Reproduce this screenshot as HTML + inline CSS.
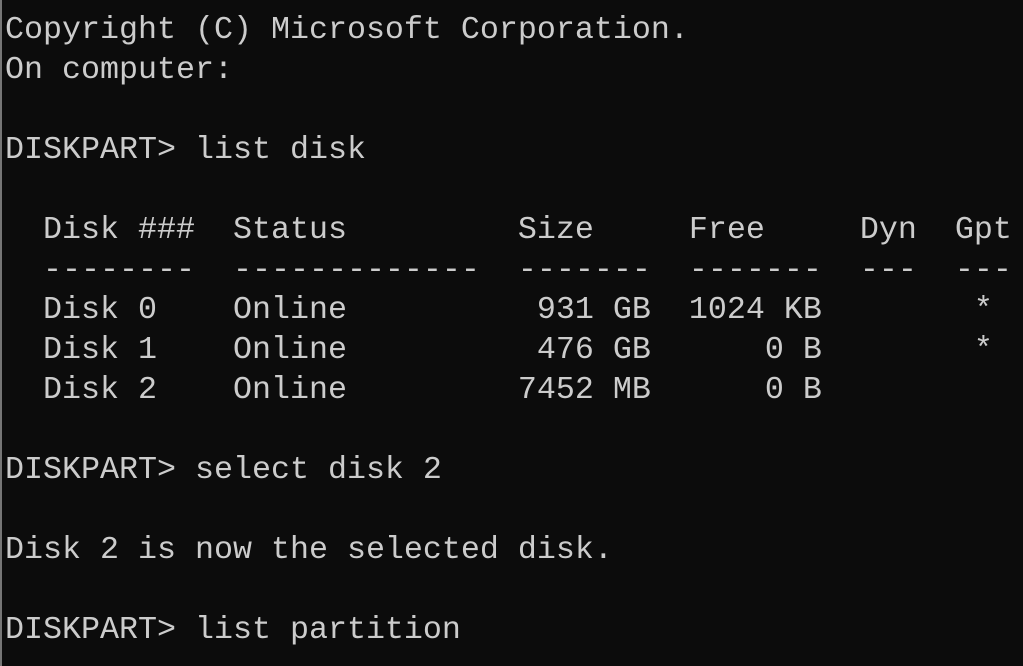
<!DOCTYPE html>
<html><head><style>
html,body{margin:0;padding:0;width:1023px;height:666px;overflow:hidden;background:#0c0c0c;}
.b{position:absolute;left:0;top:0;width:2px;height:666px;background:#767676;}
pre{position:absolute;left:5px;top:10px;margin:0;font-family:"Liberation Mono",monospace;font-size:31.67px;line-height:40px;color:#cccccc;white-space:pre;}
</style></head><body>
<div class="b"></div>
<pre>Copyright (C) Microsoft Corporation.
On computer:

DISKPART&gt; list disk

  Disk ###  Status         Size     Free     Dyn  Gpt
  --------  -------------  -------  -------  ---  ---
  Disk 0    Online          931 GB  1024 KB        *
  Disk 1    Online          476 GB      0 B        *
  Disk 2    Online         7452 MB      0 B

DISKPART&gt; select disk 2

Disk 2 is now the selected disk.

DISKPART&gt; list partition</pre>
</body></html>
